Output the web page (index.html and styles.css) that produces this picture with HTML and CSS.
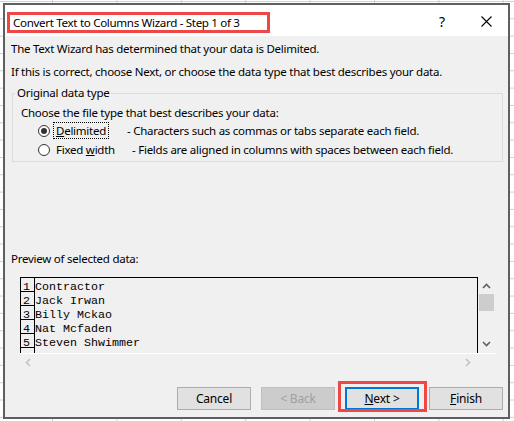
FILE: index.html
```html
<!DOCTYPE html>
<html>
<head>
<meta charset="utf-8">
<link rel="stylesheet" href="styles.css">
</head>
<body>
<div class="desk">
  <div class="dialog">
    <div class="titlebar">
      <span class="title">Convert Text to Columns Wizard - Step 1 of 3</span>
      <span class="help">?</span>
      <svg class="close" width="11" height="11" viewBox="0 0 11 11"><path d="M0.5 0.5L10.5 10.5M10.5 0.5L0.5 10.5" stroke="#000" stroke-width="1.1" fill="none"/></svg>
    </div>
    <div class="content">
      <p class="line l1">The Text Wizard has determined that your data is Delimited.</p>
      <p class="line l2">If this is correct, choose Next, or choose the data type that best describes your data.</p>
      <fieldset class="group">
        <legend>Original data type</legend>
        <p class="line choose">Choose the file type that best describes your data:</p>
        <div class="opt o1">
          <span class="radio on"></span>
          <span class="lblcell"><span class="lbl focus"><u>D</u>elimited</span></span>
          <span class="desc">- Characters such as commas or tabs separate each field.</span>
        </div>
        <div class="opt o2">
          <span class="radio"></span>
          <span class="lblcell"><span class="lbl">Fixed <u>w</u>idth</span></span>
          <span class="desc d2">- Fields are aligned in columns with spaces between each field.</span>
        </div>
      </fieldset>
      <p class="line prevlabel">Preview of selected data:</p>
      <div class="preview">
        <div class="pv-main">
          <div class="pv-box">
            <div class="row"><span class="num">1</span><span class="txt">Contractor</span></div>
            <div class="row"><span class="num">2</span><span class="txt">Jack Irwan</span></div>
            <div class="row"><span class="num">3</span><span class="txt">Billy Mckao</span></div>
            <div class="row"><span class="num">4</span><span class="txt">Nat Mcfaden</span></div>
            <div class="row"><span class="num">5</span><span class="txt">Steven Shwimmer</span></div>
            <div class="row"><span class="num"></span></div>
          </div>
          <div class="vscroll">
            <svg class="arr up" width="9" height="6" viewBox="0 0 9 6"><path d="M1 5L4.5 1.5L8 5" stroke="#606060" stroke-width="1.6" fill="none"/></svg>
            <div class="thumb"></div>
            <svg class="arr down" width="9" height="6" viewBox="0 0 9 6"><path d="M1 1L4.5 4.5L8 1" stroke="#606060" stroke-width="1.6" fill="none"/></svg>
          </div>
        </div>
        <div class="hscroll">
          <svg class="harr" width="6" height="9" viewBox="0 0 6 9"><path d="M5 1L1.5 4.5L5 8" stroke="#c2c2c2" stroke-width="1.6" fill="none"/></svg>
          <svg class="harr" width="6" height="9" viewBox="0 0 6 9"><path d="M1 1L4.5 4.5L1 8" stroke="#c2c2c2" stroke-width="1.6" fill="none"/></svg>
        </div>
      </div>
      <div class="buttons">
        <button class="btn">Cancel</button>
        <button class="btn disabled">&lt; Back</button>
        <button class="btn default"><u>N</u>ext &gt;<span class="mark"></span></button>
        <button class="btn"><u>F</u>inish</button>
      </div>
    </div>
  </div>
</div>
</body>
</html>
```
FILE: styles.css
```css
html, body {
  margin: 0;
  padding: 0;
}
body {
  font-family: "Noto Sans", "Open Sans", sans-serif;
  font-size: 11.5px;
  letter-spacing: -0.25px;
  color: #000;
}
.desk {
  width: 514px;
  height: 421px;
  box-sizing: border-box;
  padding: 3px 4px 2px 3px;
  background-color: #fff;
  background-image:
    linear-gradient(to right, #cfcfcf 1px, transparent 1px),
    linear-gradient(to bottom, #cfcfcf 1px, transparent 1px);
  background-size: 64.4px 100%, 100% 17.33px;
  background-position: 52px 0, 0 1px;
}
.dialog {
  width: 507px;
  height: 416px;
  box-sizing: border-box;
  border: 2px solid #5f5f5f;
  background: #f0f0f0;
  display: flex;
  flex-direction: column;
}
.titlebar {
  flex: none;
  height: 31px;
  background: #fff;
  display: flex;
  align-items: flex-start;
}
.title {
  margin: 7px 0 0 2px;
  width: 263px;
  height: 21px;
  box-sizing: border-box;
  border: 3px solid #ef4646;
  padding-left: 3px;
  line-height: 15px;
  font-size: 11.6px;
  letter-spacing: -0.33px;
  white-space: nowrap;
}
.help {
  margin: 7px 0 0 auto;
  width: 14px;
  text-align: center;
  font-size: 14px;
  letter-spacing: 0;
  line-height: 20px;
}
.close {
  margin: 11px 16px 0 32px;
}
.content {
  flex: 1;
  display: flex;
  flex-direction: column;
  padding: 0 5px 0 6px;
}
.line {
  margin: 0;
  line-height: 16px;
  white-space: nowrap;
}
.l1 { margin-top: 5px; }
.l2 { margin-top: 7px; }
.group {
  margin: 5px 0 0 1px;
  padding: 0 0 3px 8px;
  border: 1px solid #dcdcdc;
  min-width: 0;
}
.group legend {
  margin-left: -6px;
  padding: 0 2px;
  line-height: 16px;
}
.choose { margin-top: 4px; }
.opt {
  display: flex;
  align-items: center;
  height: 17px;
  white-space: nowrap;
}
.o1 { margin-top: 1px; }
.o2 { margin-top: 2px; }
.radio {
  width: 12px;
  height: 12px;
  box-sizing: border-box;
  border: 1px solid #333;
  border-radius: 50%;
  margin-left: 17px;
  display: flex;
  align-items: center;
  justify-content: center;
  background: #fff;
}
.radio.on::after {
  content: "";
  width: 6px;
  height: 6px;
  border-radius: 50%;
  background: #333;
}
.lblcell {
  width: 74px;
  margin-left: 3px;
  display: flex;
}
.lbl {
  line-height: 15px;
  padding: 0 2px;
  border: 1px solid transparent;
}
.lbl.focus {
  border: 1px dotted #000;
}
.desc.d2 { margin-left: 5px; }
.prevlabel { margin-top: 89px; }
.preview {
  margin: 10px 0 0 9px;
  width: 476px;
}
.pv-main {
  display: flex;
  height: 76px;
}
.pv-box {
  width: 458px;
  box-sizing: border-box;
  border: 1px solid #000;
  border-bottom: none;
  overflow: hidden;
  font-family: "Liberation Mono", "Courier New", monospace;
  font-size: 11.67px;
  letter-spacing: 0;
}
.row {
  display: flex;
  height: 14px;
}
.num {
  width: 14px;
  flex: none;
  box-sizing: border-box;
  border-right: 1px solid #000;
  border-bottom: 1px solid #000;
  padding: 4px 0 0 2px;
  line-height: 10px;
}
.txt {
  padding-top: 4px;
  line-height: 10px;
  white-space: pre;
}
.vscroll {
  width: 17px;
  display: flex;
  flex-direction: column;
  align-items: center;
}
.arr.up { margin-top: 6px; }
.thumb {
  width: 15px;
  height: 17px;
  background: #cdcdcd;
  margin-top: 5px;
}
.arr.down { margin-top: auto; margin-bottom: 6px; }
.hscroll {
  border-top: 1px solid #fff;
  height: 17px;
  display: flex;
  justify-content: space-between;
  align-items: center;
  padding: 0 5px 0 5px;
  width: 476px;
  box-sizing: border-box;
}
.hscroll .harr:last-child { margin-right: 20px; }
.buttons {
  margin-top: 17px;
  display: flex;
  justify-content: flex-end;
  gap: 10px;
}
.btn {
  width: 74px;
  height: 23px;
  box-sizing: border-box;
  border: 1px solid #adadad;
  background: #e1e1e1;
  font-family: inherit;
  font-size: 12px;
  letter-spacing: -0.2px;
  color: #000;
  padding: 0;
  position: relative;
}
.btn.disabled {
  background: #cccccc;
  border-color: #bfbfbf;
  color: #a0a0a0;
}
.btn.default {
  border: 2px solid #0078d7;
}
.btn .mark {
  position: absolute;
  left: -9px;
  right: -10px;
  top: -8px;
  bottom: -4px;
  border: 3px solid #ef4646;
}
```
